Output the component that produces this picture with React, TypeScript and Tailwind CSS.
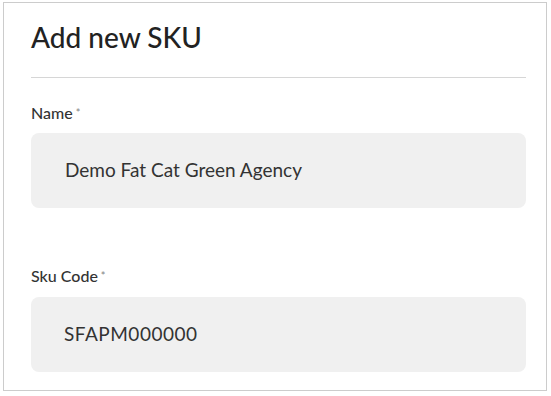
import React from 'react';

export default function App() {
  return (
    <div className="w-[551px] h-[396px] bg-white pt-[2px] pl-[3px]" style={{ fontFamily: 'Lato, "Open Sans", sans-serif' }}>
      <div className="w-[544px] h-[389px] border border-[#cccccc] pl-[27px] pr-[20px]">
        {/* Header */}
        <div className="pt-[18px] h-[74px]">
          <h1 className="text-[28px] leading-[32px] font-medium text-[#222222]">Add new SKU</h1>
        </div>
        <div className="h-px bg-[#d6d6d6]" />

        {/* Name */}
        <div className="mt-[25px]">
          <label className="block text-[16px] leading-[20px] font-medium text-[#333333]">
            Name<span className="ml-[3px] align-top text-[11px] text-[#888888]">*</span>
          </label>
          <div className="mt-[10px] h-[75px] rounded-lg bg-[#f0f0f0] flex items-center pl-[34px] text-[19px] text-[#333333]">
            Demo Fat Cat Green Agency
          </div>
        </div>

        {/* Sku Code */}
        <div className="mt-[58px]">
          <label className="block text-[16px] leading-[20px] font-medium text-[#333333]">
            Sku Code<span className="ml-[3px] align-top text-[11px] text-[#888888]">*</span>
          </label>
          <div className="mt-[11px] h-[75px] rounded-lg bg-[#f0f0f0] flex items-center pl-[33px] text-[19px] tracking-[0.5px] text-[#333333]">
            SFAPM000000
          </div>
        </div>
      </div>
    </div>
  );
}
